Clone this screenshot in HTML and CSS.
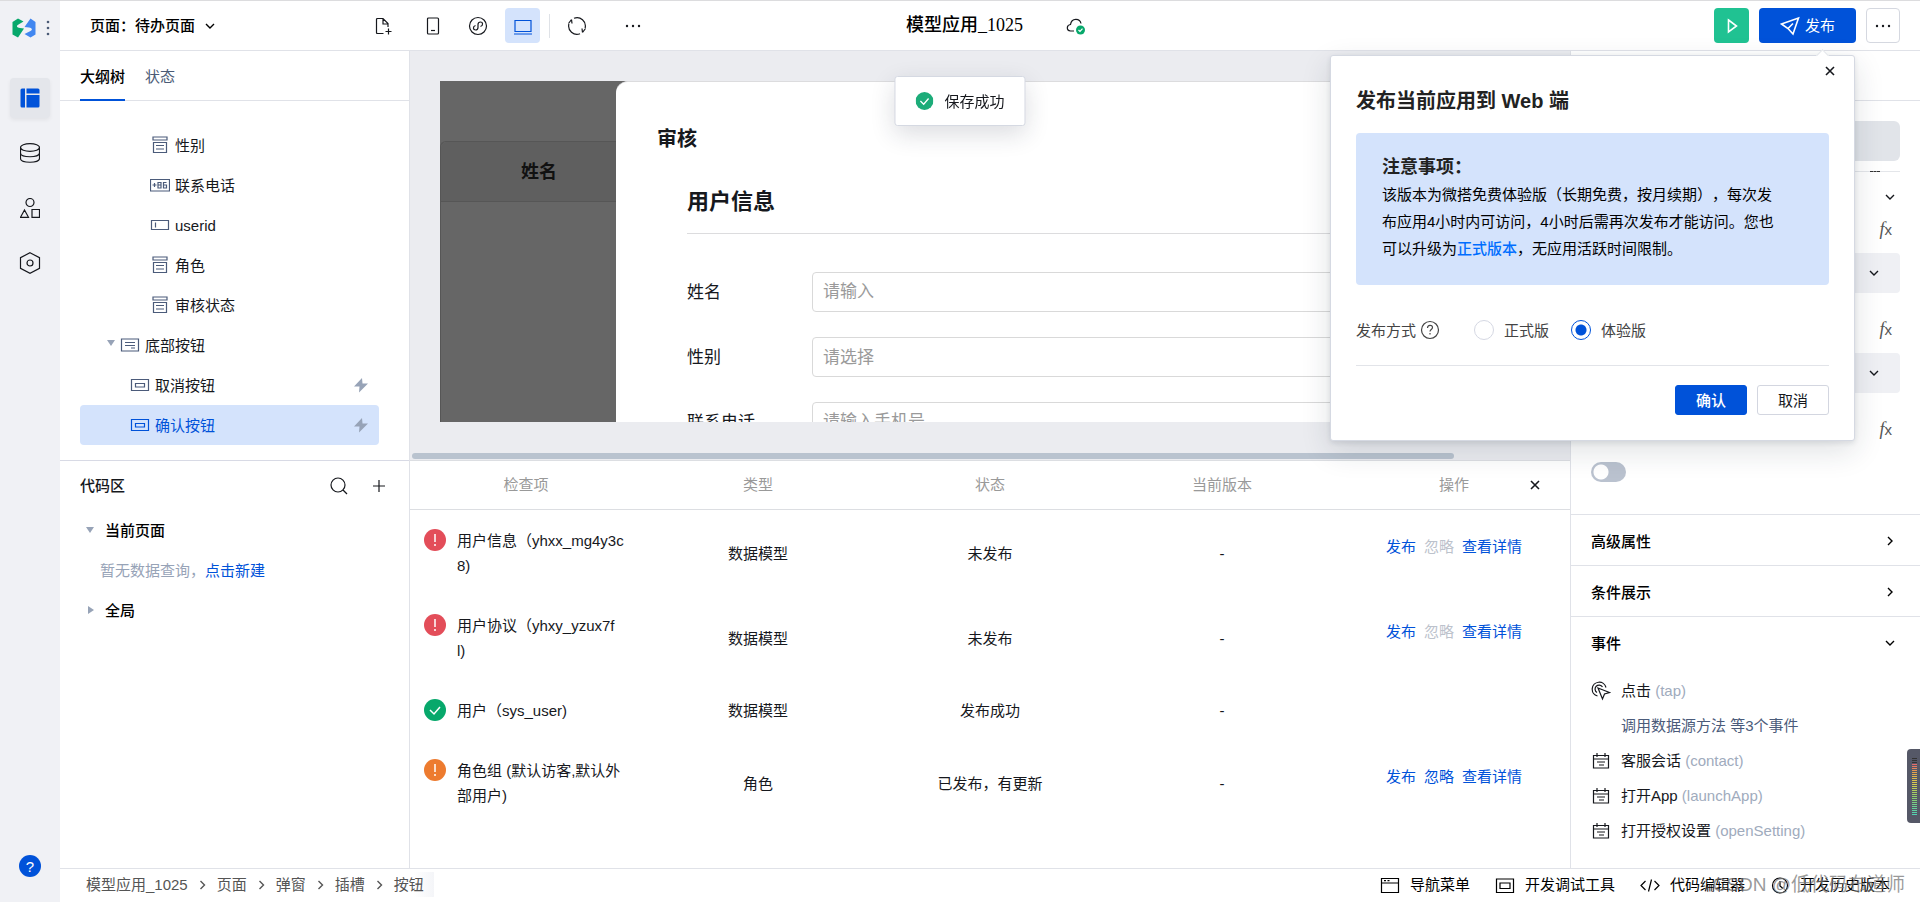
FILE: index.html
```html
<!DOCTYPE html>
<html lang="zh-CN">
<head>
<meta charset="utf-8">
<title>模型应用_1025</title>
<link rel="stylesheet" href="styles.css">
</head>
<body>
<svg class="defs" aria-hidden="true">
  <symbol id="i-down" viewBox="0 0 12 12"><path d="M2 4l4 4 4-4"/></symbol>
  <symbol id="i-right" viewBox="0 0 12 12"><path d="M4 2l4 4-4 4"/></symbol>
  <symbol id="i-close" viewBox="0 0 12 12"><path d="M2 2l8 8M10 2l-8 8"/></symbol>
  <symbol id="i-dots" viewBox="0 0 18 18"><g fill="currentColor" stroke="none"><circle cx="3" cy="9" r="1.200"/><circle cx="9" cy="9" r="1.200"/><circle cx="15" cy="9" r="1.200"/></g></symbol>
  <symbol id="i-list" viewBox="0 0 20 20"><path d="M3 2h14v3H3zM3.500 7.500h13v10h-13zM6 10.500h8M6 14h8"/></symbol>
  <symbol id="i-btn" viewBox="0 0 20 20"><path d="M1.500 4.500h17v11h-17zM5.500 8.500h9v3.500h-9z"/></symbol>
  <symbol id="i-bolt" viewBox="0 0 16 16"><path fill="currentColor" stroke="none" d="M9 1L1 9.500h5.500L6 15.500l9-9H9.500z"/></symbol>
  <symbol id="i-event" viewBox="0 0 20 20"><path d="M2.500 4.500h15v12.500h-15zM2.500 8h15M6 2v4M14 2v4M6 11h8M8 14h5"/></symbol>
  <symbol id="i-warn" viewBox="0 0 22 22"><circle cx="11" cy="11" r="11" fill="currentColor" stroke="none"/><path stroke="#fff" d="M11 5v8M11 15v2"/></symbol>
  <symbol id="i-ok" viewBox="0 0 22 22"><circle cx="11" cy="11" r="11" fill="currentColor" stroke="none"/><path stroke="#fff" d="M6 11l4 4 6-7"/></symbol>
</svg>

<div class="app">
  <nav class="rail">
    <div class="brand">
      <svg class="logo" viewBox="0 0 24 20"><path fill="#07a86b" d="M6 0.500L11.500 3.500 6.500 6.500C4 8 4.500 9.500 8 10l4 0.500L6 19.500 0.500 16.500V4z"/><path fill="#4287f0" d="M18.500 0.500L23.500 4v12.500L18.500 19.500 12.500 16l6-3c2.500-1.500 1.500-3-1.500-3.500L12.500 9z"/></svg>
      <svg class="kebab" viewBox="0 0 4 16"><g fill="currentColor" stroke="none"><circle cx="2" cy="2" r="1.300"/><circle cx="2" cy="8" r="1.300"/><circle cx="2" cy="14" r="1.300"/></g></svg>
    </div>
    <button class="rail-btn active" aria-label="页面"><svg viewBox="0 0 20 20"><path fill="currentColor" stroke="none" d="M2 0.500h3v19H2q-1.500 0-1.500-1.500V2Q0.500 0.500 2 0.500zM6.500 0.500H18q1.500 0 1.500 1.500v3.500h-13zM6.500 7h13v11q0 1.500-1.500 1.500H6.500z"/></svg></button>
    <button class="rail-btn" aria-label="数据"><svg viewBox="0 0 20 20"><ellipse cx="10" cy="4.500" rx="9.500" ry="3.800"/><path d="M0.500 4.500v11c0 5 19 5 19 0v-11M0.500 10c0 5 19 5 19 0"/></svg></button>
    <button class="rail-btn" aria-label="组件"><svg viewBox="0 0 20 20"><circle cx="10" cy="4.500" r="4"/><path d="M4.500 12L8.500 19.300h-8zM12 11.500h7.500v7.800H12z"/></svg></button>
    <button class="rail-btn" aria-label="设置"><svg class="hex" viewBox="0 0 22 22"><path d="M11 0.700l9.500 5v10.600L11 21.300l-9.500-5V5.700z"/><circle cx="11" cy="11" r="3"/></svg></button>
    <button class="help-dot">?</button>
  </nav>

  <header class="topbar">
    <button class="page-pick">页面：待办页面 <svg class="ic12"><use href="#i-down"/></svg></button>
    <div class="tools">
      <button aria-label="新建"><svg viewBox="0 0 20 20"><path d="M9.500 17.500h-6q-1 0-1-1v-13q0-1 1-1H9l5 5V11M9 2.500V8h5M14.500 12.500v6M11.500 15.500h6"/></svg></button>
      <button aria-label="手机"><svg viewBox="0 0 20 20"><rect x="4.500" y="2" width="11" height="16" rx="1"/><path d="M8 14.500h4"/></svg></button>
      <button aria-label="小程序"><svg viewBox="0 0 20 20"><circle cx="10" cy="10" r="8.500"/><path d="M7.500 9.500C4.500 10.500 5 14 7.500 14 9 14 10 13 10 11.500v-3C10 7 11 6 12.500 6 15 6 15.500 9.500 12.500 10.500"/></svg></button>
      <button class="active" aria-label="电脑"><svg viewBox="0 0 20 20"><path d="M2 4.500h16v11H2zM1 18h18"/></svg></button>
      <span class="sep"></span>
      <button aria-label="刷新"><svg viewBox="0 0 20 20"><path d="M7 2.300A8.300 8.300 0 0 1 18.100 12M13 17.700A8.300 8.300 0 0 1 1.900 8M4.500 3.500l0.500 4M4.500 3.500L1.500 7.500M15.500 16.500l-0.500-4M15.500 16.500l3-4"/></svg></button>
      <button aria-label="更多"><svg class="ic18"><use href="#i-dots"/></svg></button>
    </div>
    <div class="app-name"><h1>模型应用_1025</h1>
      <svg viewBox="0 0 20 20"><path d="M8 15H4.500C0 14.500 0.500 9 4.500 8.500 5.500 1.500 14 2 15 7.500"/><circle cx="14.500" cy="14" r="4.500" fill="#07a86b" stroke="none"/><path stroke="#fff" d="M12.500 14l1.500 1.500 2.500-2.800"/></svg>
    </div>
    <div class="top-actions">
      <button class="btn-run" aria-label="运行"><svg viewBox="0 0 20 20"><path d="M6.500 4l8 6-8 6z"/></svg></button>
      <button class="btn-publish"><svg viewBox="0 0 20 20"><path d="M1.500 8L18.500 2 13 18 8 12.500zM8 12.500l5-5"/></svg>发布</button>
      <button class="btn-more" aria-label="更多操作"><svg class="ic18"><use href="#i-dots"/></svg></button>

      <section class="popover">
        <button class="pop-close" aria-label="关闭"><svg class="ic12"><use href="#i-close"/></svg></button>
        <h2>发布当前应用到 Web 端</h2>
        <div class="notice">
          <h3>注意事项：</h3>
          <p>该版本为微搭免费体验版（长期免费，按月续期），每次发布应用4小时内可访问，4小时后需再次发布才能访问。您也可以升级为<a href="#">正式版本</a>，无应用活跃时间限制。</p>
        </div>
        <div class="mode">
          <span class="mode-label">发布方式 <svg viewBox="0 0 20 20"><circle cx="10" cy="10" r="8.500"/><path d="M7.500 8c0-3.500 5-3.500 5-0.500 0 2-2.500 2-2.500 4M10 13v1.500"/></svg></span>
          <label><input type="radio" name="mode">正式版</label>
          <label><input type="radio" name="mode" checked>体验版</label>
        </div>
        <div class="pop-foot"><button class="primary">确认</button><button>取消</button></div>
      </section>
    </div>
  </header>

  <aside class="left">
    <section class="outline">
      <div class="tabs"><button class="active">大纲树</button><button>状态</button></div>
      <ul class="tree">
        <li class="leaf"><svg><use href="#i-list"/></svg>性别</li>
        <li class="leaf"><svg viewBox="0 0 20 20"><path d="M0.500 4.500h19v11.500h-19zM2.500 10h4M4.500 8v4M8 7.500h3v5.500H8zM8 10h3M16.500 7.500h-3v5.500h3V10h-3"/></svg>联系电话</li>
        <li class="leaf"><svg viewBox="0 0 20 20"><path d="M1.500 5.500h17v9h-17zM5.500 7.500v5"/></svg>userid</li>
        <li class="leaf"><svg><use href="#i-list"/></svg>角色</li>
        <li class="leaf"><svg><use href="#i-list"/></svg>审核状态</li>
        <li class="group"><span class="caret down"></span><svg viewBox="0 0 20 20"><path d="M1.500 4h17v12h-17zM5 7.500h10M5 10.500h10M11 13h4"/></svg>底部按钮</li>
        <li class="child"><svg><use href="#i-btn"/></svg>取消按钮<svg class="bolt"><use href="#i-bolt"/></svg></li>
        <li class="child selected"><svg><use href="#i-btn"/></svg>确认按钮<svg class="bolt"><use href="#i-bolt"/></svg></li>
      </ul>
    </section>
    <section class="code">
      <div class="code-head"><h2>代码区</h2>
        <button aria-label="搜索"><svg viewBox="0 0 20 20"><circle cx="9" cy="9" r="7"/><path d="M14 14l4 4"/></svg></button>
        <button aria-label="添加"><svg viewBox="0 0 20 20"><path d="M10 4v12M4 10h12"/></svg></button>
      </div>
      <div class="code-row"><span class="caret down"></span><b>当前页面</b></div>
      <div class="code-empty">暂无数据查询，<a href="#">点击新建</a></div>
      <div class="code-row"><span class="caret side"></span><b>全局</b></div>
    </section>
  </aside>

  <main class="center">
    <section class="canvas">
      <div class="stage">
        <div class="backdrop"><div class="dim-table"><div class="dim-head">姓名</div></div></div>
        <div class="sheet">
          <h2>审核</h2>
          <div class="form">
            <h3>用户信息</h3>
            <div class="field"><label for="f-name">姓名</label><input id="f-name" placeholder="请输入"></div>
            <div class="field"><label for="f-sex">性别</label><select id="f-sex"><option>请选择</option></select></div>
            <div class="field"><label for="f-tel">联系电话</label><input id="f-tel" placeholder="请输入手机号"></div>
          </div>
        </div>
      </div>
      <div class="hbar"><span></span></div>
    </section>
    <section class="checks">
      <button class="checks-close" aria-label="关闭"><svg class="ic12"><use href="#i-close"/></svg></button>
      <table>
        <thead><tr><th>检查项</th><th>类型</th><th>状态</th><th>当前版本</th><th>操作</th></tr></thead>
        <tbody>
          <tr><td><div class="item"><svg class="red"><use href="#i-warn"/></svg><span>用户信息（yhxx_mg4y3c<br>8)</span></div></td><td>数据模型</td><td>未发布</td><td>-</td><td><div class="ops"><a href="#">发布</a><span>忽略</span><a href="#">查看详情</a></div></td></tr>
          <tr><td><div class="item"><svg class="red"><use href="#i-warn"/></svg><span>用户协议（yhxy_yzux7f<br>l)</span></div></td><td>数据模型</td><td>未发布</td><td>-</td><td><div class="ops"><a href="#">发布</a><span>忽略</span><a href="#">查看详情</a></div></td></tr>
          <tr><td><div class="item"><svg class="green"><use href="#i-ok"/></svg><span>用户（sys_user)</span></div></td><td>数据模型</td><td>发布成功</td><td>-</td><td></td></tr>
          <tr><td><div class="item"><svg class="orange"><use href="#i-warn"/></svg><span>角色组 (默认访客,默认外部用户)</span></div></td><td>角色</td><td>已发布，有更新</td><td>-</td><td><div class="ops"><a href="#">发布</a><a href="#">忽略</a><a href="#">查看详情</a></div></td></tr>
        </tbody>
      </table>
    </section>
  </main>

  <aside class="right">
    <div class="right-head"></div>
    <div class="props">
      <div class="segment"></div>
      <div class="rule"></div>
      <div class="group-head"><svg class="ic12"><use href="#i-down"/></svg></div>
      <div class="fx-row"><button><i>f</i>x</button></div>
      <div class="pick"><select aria-label="属性一"><option></option></select><svg class="ic12"><use href="#i-down"/></svg></div>
      <div class="fx-row spaced"><button><i>f</i>x</button></div>
      <div class="pick"><select aria-label="属性二"><option></option></select><svg class="ic12"><use href="#i-down"/></svg></div>
      <div class="fx-row spaced"><button><i>f</i>x</button></div>
      <input class="switch" type="checkbox" aria-label="开关">
    </div>
    <button class="section">高级属性<svg class="ic12"><use href="#i-right"/></svg></button>
    <button class="section">条件展示<svg class="ic12"><use href="#i-right"/></svg></button>
    <button class="section">事件<svg class="ic12"><use href="#i-down"/></svg></button>
    <ul class="events">
      <li><svg viewBox="0 0 20 20"><path d="M6.500 15A7 7 0 1 1 15 6.500M6 11.500A4 4 0 1 1 11.500 6M7 7l11.500 4.500-5 1.500-2 5z"/></svg>点击 <em>(tap)</em></li>
      <li class="detail">调用数据源方法 等3个事件</li>
      <li><svg><use href="#i-event"/></svg>客服会话 <em>(contact)</em></li>
      <li><svg><use href="#i-event"/></svg>打开App <em>(launchApp)</em></li>
      <li><svg><use href="#i-event"/></svg>打开授权设置 <em>(openSetting)</em></li>
    </ul>
  </aside>

  <footer class="bottom">
    <nav class="crumbs">
      <a href="#">模型应用_1025</a><svg class="ic12"><use href="#i-right"/></svg><a href="#">页面</a><svg class="ic12"><use href="#i-right"/></svg><a href="#">弹窗</a><svg class="ic12"><use href="#i-right"/></svg><a href="#">插槽</a><svg class="ic12"><use href="#i-right"/></svg><a class="last" href="#">按钮</a>
    </nav>
    <div class="links">
      <button><svg viewBox="0 0 20 20"><path d="M1.500 3.500h17v14h-17zM1.500 8h17M4 5.700h2M7.500 5.700h2"/></svg>导航菜单</button>
      <button><svg viewBox="0 0 20 20"><path d="M1.500 4h17v13.500h-17zM5 8h10v5.500H5z"/></svg>开发调试工具</button>
      <button><svg viewBox="0 0 20 20"><path d="M5.500 6L1 10.500 5.500 15M14.500 6l4.500 4.500-4.500 4.500M11.500 4.500l-3 12"/></svg>代码编辑器</button>
      <button><svg viewBox="0 0 20 20"><circle cx="10" cy="10.500" r="7.500"/><path d="M10 6v5l3 2.500"/></svg>开发历史版本</button>
    </div>
    <span class="watermark">CSDN @低代码布道师</span>
  </footer>
</div>

<div class="toast" role="status"><svg><use href="#i-ok"/></svg>保存成功</div>
<div class="meter" aria-hidden="true"><span></span></div>
</body>
</html>
```
FILE: styles.css
```css
* { box-sizing: border-box; }
body {
  margin: 0;
  font: 15px/25px "Liberation Sans", "Noto Sans CJK SC", sans-serif;
  text-spacing-trim: space-all;
  color: #16181d;
  background: #fff;
}
h1, h2, h3, p, ul { margin: 0; padding: 0; }
ul { list-style: none; }
a { color: #0052d9; text-decoration: none; }
button {
  font: inherit;
  color: inherit;
  background: none;
  border: 0;
  padding: 0;
  display: flex;
  align-items: center;
  justify-content: center;
}
svg {
  width: 20px;
  height: 20px;
  fill: none;
  stroke: currentColor;
  stroke-width: 1.2;
  flex: none;
}
.defs { position: absolute; width: 0; height: 0; }
.ic12 { width: 12px; height: 12px; stroke-width: 1.4; }
.ic18 { width: 18px; height: 18px; }

.app {
  height: 100vh;
  display: grid;
  grid-template-columns: 60px 350px minmax(0, 1fr) 350px;
  grid-template-rows: 50px minmax(0, 1fr) 34px;
  border-top: 1px solid #dcdcde;
}
.app > * { min-width: 0; }

/* icon rail */
.rail {
  grid-row: 1 / 4;
  background: #f0f1f5;
  display: flex;
  flex-direction: column;
  align-items: center;
  gap: 15px;
  padding-bottom: 25px;
}
.brand {
  display: flex;
  align-items: center;
  gap: 10px;
  height: 54px;
  margin-bottom: 8px;
  padding-left: 1px;
}
.logo { width: 24px; height: 20px; stroke: none; }
.kebab { width: 4px; height: 16px; color: #4b5b76; }
.rail-btn { width: 40px; height: 40px; border-radius: 4px; }
.rail-btn .hex { width: 22px; height: 22px; }
.rail-btn.active {
  background: #e4e6eb;
  color: #0052d9;
  box-shadow: 0 2px 4px rgba(0, 0, 0, .06);
}
.help-dot {
  width: 22px;
  height: 22px;
  margin-top: auto;
  border-radius: 50%;
  background: #0052d9;
  color: #fff;
}

/* top bar */
.topbar {
  grid-column: 2 / 5;
  display: flex;
  align-items: center;
  border-bottom: 1px solid #e0e2e8;
  padding: 0 20px 0 30px;
  position: relative;
}
.page-pick { width: 276px; gap: 9px; font-weight: 500; color: #000; justify-content: flex-start; }
.tools { display: flex; align-items: center; gap: 10px; }
.tools button { width: 35px; height: 35px; border-radius: 4px; }
.tools button:first-child { margin-right: 4px; }
.tools .active { background: #d4e3fc; color: #0052d9; }
.sep { width: 1px; height: 24px; background: #dfe2e7; margin: 0 -1px; }
.tools button:last-child { margin-left: 11px; }
.app-name {
  flex: 1;
  display: flex;
  align-items: center;
  gap: 43px;
  padding-left: 256px;
}
.app-name h1 { font: 500 18px/25px "Liberation Serif", "Noto Sans CJK SC", serif; color: #000; }
.top-actions { display: flex; gap: 10px; position: relative; }
.top-actions > button { height: 35px; border-radius: 4px; }
.btn-run { width: 35px; background: #20c292; color: #fff; }
.btn-run svg, .btn-publish svg { stroke-width: 1.6; }
.btn-publish { width: 97px; gap: 5px; background: #0052d9; color: #fff; }
.btn-more { width: 34px; border: 1px solid #d5d8e0; }

/* publish popover */
.popover {
  position: absolute;
  z-index: 3;
  top: 47px;
  right: 45px;
  width: 525px;
  padding: 28px 25px 25px;
  background: #fff;
  border: 1px solid #d5d9e2;
  border-radius: 3px;
  box-shadow: 0 10px 30px rgba(30, 40, 60, .14), 0 2px 5px rgba(30, 40, 60, .1);
}
.popover::before {
  content: "";
  position: absolute;
  top: -5px;
  right: 27px;
  width: 8px;
  height: 8px;
  background: #fff;
  border: 1px solid #e2e5ea;
  border-width: 1px 0 0 1px;
  transform: rotate(45deg);
}
.pop-close { position: absolute; top: 5px; right: 14px; width: 20px; height: 20px; }
.pop-close svg, .checks-close svg { stroke-width: 1.6; }
.popover h2 { font-size: 20px; line-height: 34px; color: #222; }
.notice {
  margin: 15px 0 0;
  padding: 20px 44px 23px 26px;
  background: #d4e3fc;
  border-radius: 4px;
}
.notice h3 { font-size: 18px; line-height: 28px; color: #222; }
.notice p { line-height: 27px; color: #000; }
.notice a { color: #006eff; font-weight: 500; }
.mode {
  display: flex;
  align-items: center;
  height: 81px;
  border-bottom: 1px solid #e2e4e9;
  padding-top: 10px;
  color: #444;
}
.mode-label { display: flex; align-items: center; gap: 4px; margin-right: 34px; }
.mode label { display: flex; align-items: center; gap: 10px; margin-right: 22px; }
.mode input {
  appearance: none;
  width: 20px;
  height: 20px;
  margin: 0;
  border: 1px solid #d5d8e3;
  border-radius: 50%;
}
.mode input:checked {
  border-color: #0052d9;
  background: radial-gradient(circle, #0052d9 5px, transparent 6px);
}
.pop-foot { display: flex; justify-content: flex-end; gap: 10px; padding-top: 19px; }
.pop-foot button { width: 72px; height: 30px; border: 1px solid #d3d6e0; border-radius: 3px; }
.pop-foot .primary { background: #0052d9; border-color: #0052d9; color: #fff; font-weight: 500; }

/* left panel */
.left { display: flex; flex-direction: column; border-right: 1px solid #e0e2e8; }
.outline { flex: none; border-bottom: 1px solid #d8dae5; }
.code { flex: 1; min-height: 0; overflow: hidden; }
.tabs {
  display: flex;
  gap: 20px;
  height: 50px;
  padding: 0 20px;
  border-bottom: 1px solid #e0e2e8;
}
.tabs button { color: #4b5b76; border-bottom: 2px solid transparent; height: 50px; padding-top: 2px; }
.tabs .active { color: #000; border-color: #0052d9; font-weight: 500; }
.tree { padding: 24px 30px 15px 20px; }
.tree li { display: flex; align-items: center; gap: 5px; height: 40px; border-radius: 4px; padding-right: 10px; }
.tree li svg { color: #4b5b7a; }
.tree .leaf { padding-left: 70px; }
.tree .group { padding-left: 20px; }
.tree .group .caret { margin: 0 0 4px 7px; }
.tree .child { padding-left: 50px; }
.tree .bolt { width: 16px; height: 16px; margin-left: auto; color: #97a3b7; }
.tree .selected { background: #d4e3fc; color: #0052d9; }
.tree .selected svg:first-child { color: #0052d9; }
.caret { border: 4px solid transparent; width: 0; height: 0; flex: none; }
.caret.down { border-top: 6px solid #97a3b7; border-bottom: 0; }
.caret.side { border-left: 6px solid #97a3b7; border-right: 0; }
.code-head { display: flex; align-items: center; height: 49px; padding: 0 20px; gap: 20px; }
.code-head h2 { font-size: 15px; font-weight: 500; flex: 1; }
.code-row, .code-empty { display: flex; align-items: center; height: 40px; }
.code-row { padding-left: 26px; }
.code-row .caret { margin-right: 11px; }
.code-row .side { margin-left: 2px; }
.code-row b { font-weight: 500; color: #000; }
.code-empty { padding-left: 40px; color: #97a3b7; }

/* canvas */
.center { display: grid; grid-template-rows: minmax(0, 1fr) minmax(0, 1fr); }
.canvas, .checks { min-width: 0; overflow: hidden; }
.canvas { background: #ebecf0; display: flex; flex-direction: column; padding: 30px 0 1px; }
.stage { flex: 1; min-height: 0; overflow: hidden; display: flex; margin: 0 0 31px 30px; background: #666; }
.backdrop { width: 176px; padding-top: 60px; }
.dim-table { height: 100%; border: solid #565656; border-width: 1px 0 0 1px; border-top-left-radius: 6px; }
.dim-head {
  height: 60px;
  padding: 18px 0 0 80px;
  background: #5f5f5f;
  border-bottom: 1px solid #565656;
  border-top-left-radius: 6px;
  font-size: 18px;
  font-weight: 700;
  color: #111;
}
.sheet { flex: 1; background: #fff; border-top: 1px solid #dcdcde; border-top-left-radius: 12px; padding: 42px 0 0 41px; }
.sheet h2 { font-size: 20px; line-height: 30px; }
.form { padding-left: 30px; }
.form h3 { font-size: 22px; line-height: 32px; margin: 32px 0 38px; padding-bottom: 15px; border-bottom: 1px solid #dcdcde; }
.field { display: flex; align-items: center; margin-bottom: 25px; font-size: 17px; }
.field label { width: 125px; }
.field input, .field select {
  flex: 1;
  height: 40px;
  padding: 0 10px;
  font: inherit;
  color: #9a9a9a;
  background: #fff;
  border: 1px solid #d9d9d9;
  border-radius: 4px;
  appearance: none;
}
.field ::placeholder { color: #9a9a9a; opacity: 1; }
.hbar { height: 6px; flex: none; padding-left: 2px; }
.hbar span { display: block; width: 90%; height: 6px; border-radius: 3px; background: #b9c3cf; }

/* publish checks */
.checks { border-top: 1px solid #dcdee2; position: relative; }
.checks-close { position: absolute; top: 14px; right: 25px; width: 20px; height: 20px; }
.checks table { width: 100%; table-layout: fixed; border-collapse: collapse; text-align: center; }
.checks th { height: 49px; padding: 0; font-weight: 400; color: #999; border-bottom: 1px solid #dcdee2; }
.checks td { padding: 18px 14px 17px; }
.item { display: flex; gap: 11px; text-align: left; word-break: break-all; }
.item svg { width: 22px; height: 22px; margin-top: 1px; stroke-width: 1.5; }
.red { color: #e34d59; }
.green { color: #07a86b; }
.orange { color: #ed7b2f; }
.ops { display: flex; justify-content: center; gap: 8px; padding-bottom: 14px; }
.ops span { color: #bcc2cc; }

/* right panel */
.right { border-left: 1px solid #e0e2e8; overflow: hidden; }
.right-head { height: 50px; border-bottom: 1px solid #e0e2e8; }
.props { padding: 20px 20px 32px; }
.segment { height: 40px; border-radius: 6px; background: #e1e4e9; }
.rule { margin-top: 10px; height: 1px; background: #e4e6ea; }
.rule::after {
  content: "";
  display: block;
  width: 10px;
  margin-left: auto;
  margin-right: 20px;
  border-top: 1px dashed #333;
}
.group-head { display: flex; align-items: center; justify-content: flex-end; height: 40px; margin-top: 5px; padding-right: 4px; }
.fx-row { display: flex; justify-content: flex-end; height: 24px; margin-bottom: 12px; padding-right: 8px; color: #555; }
.fx-row i { font: italic 18px/24px "Liberation Serif", serif; }
.spaced { margin-top: 24px; }
.pick { display: flex; align-items: center; height: 40px; padding-right: 20px; background: #eff0f4; border-radius: 4px; }
.pick select { flex: 1; height: 40px; appearance: none; background: none; border: 0; }
.switch {
  appearance: none;
  display: block;
  width: 35px;
  height: 20px;
  margin: 21px 0 0;
  border-radius: 10px;
  background: radial-gradient(circle at 10px 10px, #fff 7px, transparent 8px) #bac2cf;
}
.section {
  width: 100%;
  height: 51px;
  border-top: 1px solid #e0e2e8;
  padding: 2px 24px 0 20px;
  justify-content: space-between;
  font-weight: 500;
  color: #000;
}
.events { padding: 6px 20px; }
.events li { display: flex; align-items: center; height: 35px; white-space: pre; }
.events svg { margin-right: 10px; }
.events em { font-style: normal; color: #a0abbd; }
.events .detail { padding-left: 30px; color: #4b5b7a; }

/* footer */
.bottom {
  grid-column: 2 / 5;
  display: flex;
  align-items: center;
  justify-content: space-between;
  border-top: 1px solid #e0e2e8;
  padding: 0 30px 2px 26px;
  position: relative;
}
.crumbs { display: flex; align-items: center; gap: 8px; }
.crumbs a { color: #555; }
.crumbs svg { width: 13px; color: #555; }
.crumbs .last { padding-right: 10px; background: linear-gradient(90deg, #fff 50%, #f4f5f8); }
.links { display: flex; gap: 25px; color: #000; }
.links button { gap: 10px; }
.watermark {
  position: absolute;
  right: 15px;
  top: 3px;
  font-size: 19px;
  color: rgba(120, 120, 120, .75);
}

/* overlays */
.toast {
  position: fixed;
  top: 76px;
  left: 50%;
  transform: translateX(-50%);
  display: flex;
  align-items: center;
  gap: 11px;
  height: 50px;
  padding: 0 20px;
  background: #fff;
  border: 1px solid #d5d9e2;
  border-radius: 3px;
  box-shadow: 0 8px 24px rgba(30, 40, 60, .16);
}
.toast svg { width: 18px; height: 18px; color: #1cac79; stroke-width: 1.6; }
.meter {
  position: fixed;
  right: 0;
  top: 749px;
  width: 13px;
  height: 74px;
  padding: 9px 3px 8px 5px;
  background: #555867;
  border-radius: 4px 0 0 4px;
}
.meter span {
  display: block;
  height: 100%;
  background:
    repeating-linear-gradient(#0000 0 1px, #555867 1px 2px),
    linear-gradient(#333 0 8%, #e8666d 10%, #e5a24c 25%, #d8cf4e 45%, #8ccf6c 70%, #4fd3b4);
}
```
